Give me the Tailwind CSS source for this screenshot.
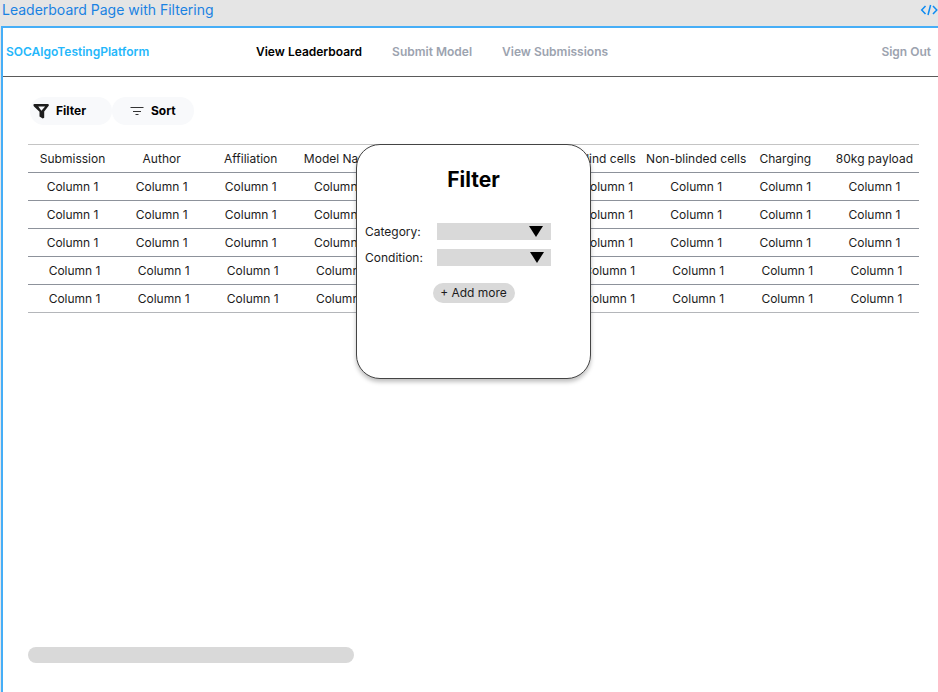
<!DOCTYPE html>
<html lang="en">
<head>
<meta charset="utf-8">
<meta name="viewport" content="width=device-width, initial-scale=1">
<title>Leaderboard Page with Filtering</title>
<script src="https://cdn.jsdelivr.net/npm/@tailwindcss/browser@4"></script>
</head>
<body class="flex min-h-screen flex-col overflow-x-hidden bg-[#e5e5e5] font-['Inter',sans-serif] text-xs text-[#1c1c1c]">
  <div class="flex h-[26px] items-start justify-between pl-[2px] text-[#1a82e2]">
    <h1 class="text-sm">Leaderboard Page with Filtering</h1>
    <svg class="mt-1 h-3 w-[18px]" viewBox="0 0 18 12" fill="none" stroke="#0d8bf2" stroke-width="1.5" aria-hidden="true"><path d="M5.5 2 1.7 6l3.8 4M10.600 1 8 11M13 2l3.800 4L13 10"/></svg>
  </div>

  <div class="ml-px flex grow flex-col border-t-2 border-l-2 border-[#46aef7] bg-white">
    <header class="flex h-[49px] items-center border-b border-[#5a5a5a] pr-[7px] pl-[3px] font-semibold text-[#9ca3af]">
      <a href="#" class="w-[250px] text-[#25b7fb]">SOCAlgoTestingPlatform</a>
      <nav class="flex grow gap-[30px]">
        <a href="#" class="text-black">View Leaderboard</a>
        <a href="#">Submit Model</a>
        <a href="#">View Submissions</a>
      </nav>
      <a href="#">Sign Out</a>
    </header>

    <main class="flex grow flex-col pt-5 pr-[19px] pb-[29px] pl-[25px]">
      <div class="flex pl-[2px] font-bold text-black">
        <button type="button" class="flex h-7 w-[82px] items-center gap-[6px] rounded-full bg-[#f8f9fb] pl-[3px]">
          <svg class="h-4 w-[17px]" viewBox="0 0 17 16" aria-hidden="true"><path fill="#1d1d1d" fill-rule="evenodd" d="M1.500 1h13.200c1.300 0 1.500 1.200.8 2.100L11.200 8.500v6.200l-1.500.7-3.200-1.900V8.800L1 3.400C0 2.400.3 1 1.500 1Zm3.800 2.600L8.400 7.800l3.700-4.200Z"/></svg>
          Filter
        </button>
        <button type="button" class="flex h-7 w-[82px] items-center gap-[7px] rounded-full bg-[#f8f9fb] pl-[18px]">
          <svg class="h-3 w-[14px]" viewBox="0 0 14 12" fill="none" stroke="#333" aria-hidden="true"><path d="M.5 2.500h13M3 6.500h8M5.500 9.500h3"/></svg>
          Sort
        </button>
      </div>

      <div class="relative mt-[19px]">
        <table id="board" class="w-full table-fixed border-collapse text-center whitespace-nowrap">
          <thead>
            <tr class="h-7 border-y border-t-[#c4c4c4] border-b-[#8d929b]">
              <th class="p-0 font-normal">Submission</th>
              <th class="p-0 font-normal">Author</th>
              <th class="p-0 font-normal">Affiliation</th>
              <th class="p-0 font-normal">Model Name</th>
              <th class="p-0 font-normal"></th>
              <th class="p-0 font-normal"></th>
              <th class="p-0 font-normal">Blind cells</th>
              <th class="p-0 font-normal"><div class="-mx-2">Non-blinded cells</div></th>
              <th class="p-0 font-normal">Charging</th>
              <th class="p-0 font-normal">80kg payload</th>
            </tr>
          </thead>
          <tbody>
            <tr class="h-7 border-b border-[#8d929b]"><td>Column 1</td><td>Column 1</td><td>Column 1</td><td>Column 1</td><td></td><td></td><td>Column 1</td><td>Column 1</td><td>Column 1</td><td>Column 1</td></tr>
            <tr class="h-7 border-b border-[#8d929b]"><td>Column 1</td><td>Column 1</td><td>Column 1</td><td>Column 1</td><td></td><td></td><td>Column 1</td><td>Column 1</td><td>Column 1</td><td>Column 1</td></tr>
            <tr class="h-7 border-b border-[#8d929b]"><td>Column 1</td><td>Column 1</td><td>Column 1</td><td>Column 1</td><td></td><td></td><td>Column 1</td><td>Column 1</td><td>Column 1</td><td>Column 1</td></tr>
          </tbody>
          <tbody class="[&_td]:pl-1">
            <tr class="h-7 border-b border-[#8d929b]"><td>Column 1</td><td>Column 1</td><td>Column 1</td><td>Column 1</td><td></td><td></td><td>Column 1</td><td>Column 1</td><td>Column 1</td><td>Column 1</td></tr>
            <tr class="h-7 border-b border-[#b4b6ba]"><td>Column 1</td><td>Column 1</td><td>Column 1</td><td>Column 1</td><td></td><td></td><td>Column 1</td><td>Column 1</td><td>Column 1</td><td>Column 1</td></tr>
          </tbody>
        </table>

        <form role="dialog" aria-labelledby="filter-title" class="absolute top-0 left-[328px] flex h-[235px] w-[235px] flex-col rounded-3xl border border-[#444] bg-white px-2 pt-[21px] shadow-[0_3px_4px_rgba(0,0,0,0.25)]">
          <h2 id="filter-title" class="text-center text-[21px] leading-7 font-bold text-black">Filter</h2>
          <div class="mt-[29px] grid grid-cols-[72px_114px] items-center gap-y-[9px]">
            <label for="category" class="leading-[17px]">Category:</label>
            <div class="relative h-[17px]">
              <select id="category" class="block h-full w-full appearance-none bg-[#d9d9d9]"><option></option></select>
              <svg class="pointer-events-none absolute top-[3px] right-2 h-[11px] w-[14px]" viewBox="0 0 14 11" aria-hidden="true"><path d="M0 0h14L7 11Z"/></svg>
            </div>
            <label for="condition" class="leading-[17px]">Condition:</label>
            <div class="relative h-[17px]">
              <select id="condition" class="block h-full w-full appearance-none bg-[#d9d9d9]"><option></option></select>
              <svg class="pointer-events-none absolute top-[3px] right-[7px] h-[11px] w-[14px]" viewBox="0 0 14 11" aria-hidden="true"><path d="M0 0h14L7 11Z"/></svg>
            </div>
          </div>
          <button type="button" class="mt-[17px] h-5 w-[82px] self-center rounded-full bg-[#d9d9d9] whitespace-nowrap">+ Add more</button>
        </form>
      </div>

      <div role="scrollbar" aria-label="Scroll table" aria-controls="board" aria-orientation="horizontal" aria-valuenow="0" class="mt-auto h-4 w-[326px] rounded-full bg-[#d9d9d9]"></div>
    </main>
  </div>
</body>
</html>
